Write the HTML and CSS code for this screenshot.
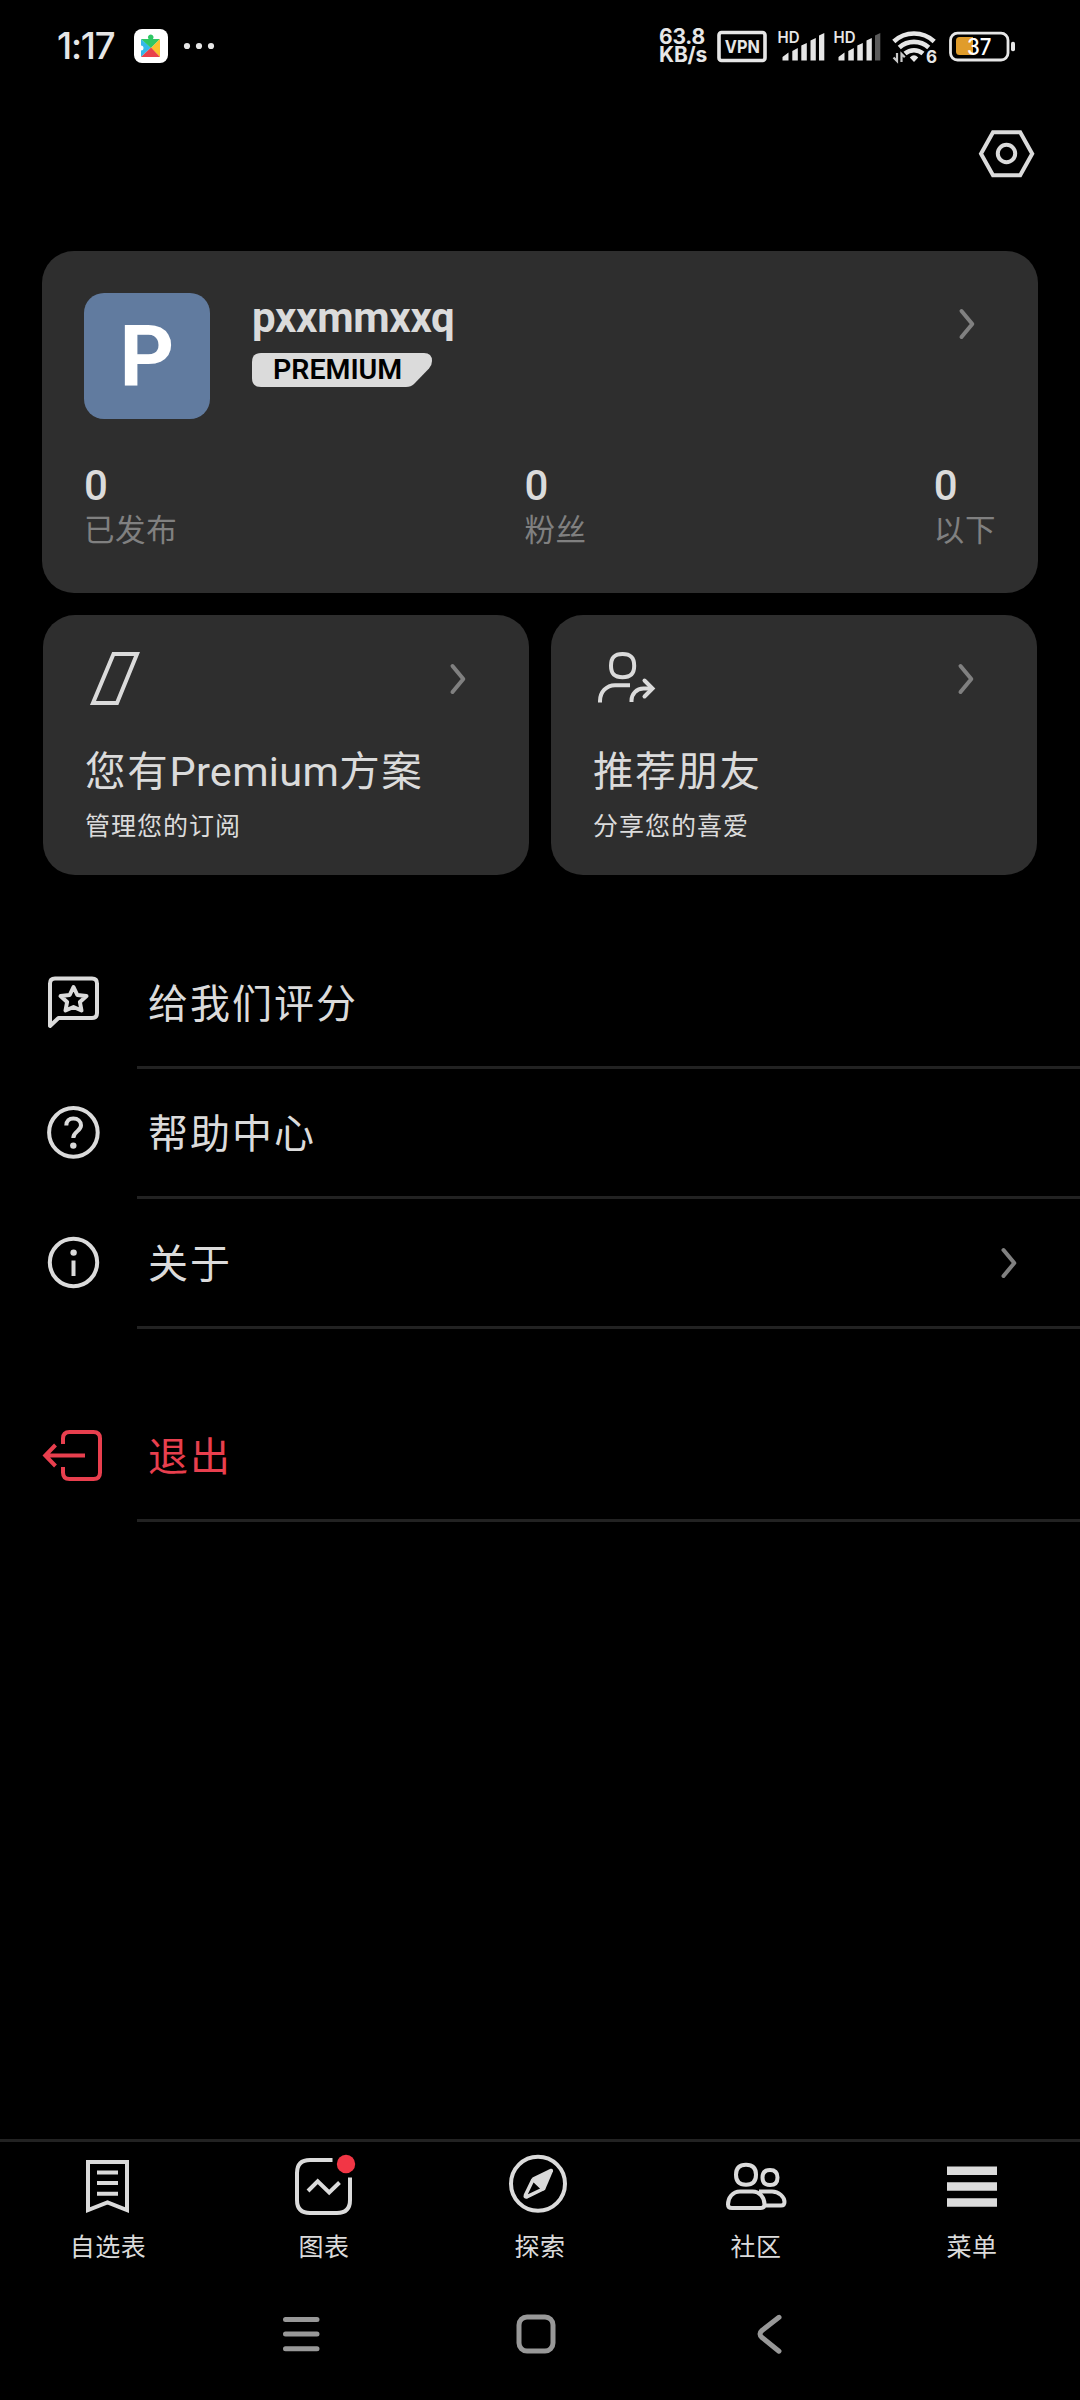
FILE: index.html
```html
<!DOCTYPE html>
<html lang="zh-CN">
<head>
<meta charset="utf-8">
<title>菜单</title>
<link rel="stylesheet" href="styles.css">
</head>
<body>
<div class="screen">
  <header class="status">
    <span class="clock">1:17</span>
    <svg class="app" viewBox="0 0 34 34" width="34" height="34">
      <rect width="34" height="34" rx="8" fill="#fff"/>
      <path d="M7 10v6.500a2.500 2.500 0 1 1 0 5V28l10-9.500Z" fill="#35b9ea"/>
      <path d="M7 10h7.500a2.800 2.800 0 1 1 4.500 0h7L17 19Z" fill="#2fc765"/>
      <path d="M26 10v18l-9-9Z" fill="#fbc02f"/>
      <path d="M7 28h19l-9-9.500Z" fill="#e9404a"/>
    </svg>
    <svg class="dots" viewBox="0 0 32 8" width="32" height="8" fill="#e6e6e6"><circle cx="4" cy="4" r="3.100"/><circle cx="16" cy="4" r="3.100"/><circle cx="28" cy="4" r="3.100"/></svg>
    <div class="speed"><span>63.8</span><span>KB/s</span></div>
    <svg class="vpn" viewBox="717 29 51 33" width="51" height="33">
      <rect x="719" y="31.500" width="46" height="28" rx="2.500" fill="none" stroke="#e6e6e6" stroke-width="3.600"/>
      <text x="742.300" y="51.700" class="vpn-text" textLength="35" lengthAdjust="spacingAndGlyphs">VPN</text>
    </svg>
    <svg class="signal" viewBox="777 25 50 41" width="50" height="41" fill="#e6e6e6">
      <text x="777.500" y="42" class="hd" textLength="22" lengthAdjust="spacingAndGlyphs">HD</text>
      <path d="M782.500 59.500v-3.500l6-4.500v8ZM792.300 59.500V50l5.500-3v12.500ZM801.300 59.500V44.500l5.500-2.500v17.500ZM810.500 59.500V39.500l5.300-2.500v22.500ZM819 59.500V34.500l5.300-2.500v27.500Z"/>
    </svg>
    <svg class="signal second" viewBox="777 25 50 41" width="50" height="41" fill="#e6e6e6">
      <text x="777.500" y="42" class="hd" textLength="22" lengthAdjust="spacingAndGlyphs">HD</text>
      <path d="M782.500 59.500v-3.500l6-4.500v8ZM792.300 59.500V50l5.500-3v12.500ZM801.300 59.500V44.500l5.500-2.500v17.500ZM810.500 59.500V39.500l5.300-2.500v22.500Z"/>
      <path d="M819 59.500V34.500l5.300-2.500v27.500Z" fill="#5a5a5a"/>
    </svg>
    <svg class="wifi" viewBox="892 22 45 48" width="45" height="48">
      <g fill="none" stroke="#e6e6e6" stroke-width="4.600">
        <path d="M893.800 41.500a29.500 29.500 0 0 1 40.400 0"/><path d="M899.300 47.500a22 22 0 0 1 29.400 0"/><path d="M905 53.500a14 14 0 0 1 18 0"/>
      </g>
      <path d="M909.800 57.500q4.200-4.500 8.400 0l-4.200 4.500Z" fill="#e6e6e6"/>
      <path d="M897 53v8l-3.500-3.500M901.500 62v-8l3.300 3.300" fill="none" stroke="#c9c9c9" stroke-width="2.200"/>
      <text x="926" y="62.500" class="six">6</text>
    </svg>
    <svg class="battery" viewBox="948 29 68 33" width="68" height="33">
      <rect x="950.500" y="32.200" width="57.500" height="26.800" rx="7" fill="none" stroke="#e6e6e6" stroke-width="2.800"/>
      <path d="M973 36v18h-13.500a3.500 3.500 0 0 1-3.500-3.500v-11a3.500 3.500 0 0 1 3.500-3.500Z" fill="#e09c2b"/>
      <rect x="1011" y="40.700" width="4" height="9.500" rx="1.800" fill="#e6e6e6"/>
      <text x="967" y="53.800" class="charge" textLength="24.500" lengthAdjust="spacingAndGlyphs">37</text>
    </svg>
  </header>

  <div class="toolbar">
    <svg viewBox="976 127 60 54" width="60" height="54" fill="none" stroke="#dbdbdb" stroke-width="4">
      <path d="M993 132.200h27.200l12 21.500-12 21.500H993l-12-21.500Z"/><circle cx="1006.500" cy="153.500" r="8.700"/>
    </svg>
  </div>

  <main>
    <section class="card profile">
      <div class="profile-top">
        <div class="avatar">P</div>
        <div class="who">
          <div class="name">pxxmmxxq</div>
          <div class="badge">
            <svg viewBox="0 0 180 34" width="180" height="34"><path d="M9 0H172q8 0 8 8 0 4-3 7.500L162 31q-3 3-8 3H9q-9 0-9-9V9q0-9 9-9Z" fill="#dbdbdb"/></svg>
            <span>PREMIUM</span>
          </div>
        </div>
        <svg class="chevron" viewBox="0 0 18 34" width="18" height="34"><path d="M3.500 4 14.300 17 3.500 30"/></svg>
      </div>
      <div class="stats">
        <div><b>0</b><span>已发布</span></div>
        <div><b>0</b><span>粉丝</span></div>
        <div><b>0</b><span>以下</span></div>
      </div>
    </section>

    <div class="tiles">
      <section class="card tile">
        <div class="tile-top">
          <svg viewBox="85 647 64 64" width="64" height="64" fill="none" stroke="#dbdbdb" stroke-width="4"><path d="M113.500 654h23.500l-20 49H93Z"/></svg>
          <svg class="chevron" viewBox="0 0 18 34" width="18" height="34"><path d="M3.500 4 14.300 17 3.500 30"/></svg>
        </div>
        <h2>您有<span class="latin">Premium</span>方案</h2>
        <p>管理您的订阅</p>
      </section>
      <section class="card tile">
        <div class="tile-top">
          <svg viewBox="593 647 64 64" width="64" height="64" fill="none" stroke="#dbdbdb" stroke-width="4">
            <path d="M622.500 654c8 0 11.700 3.500 11.700 11.700s-3.700 11.500-11.700 11.500-11.500-3.300-11.500-11.500 3.500-11.700 11.500-11.700Z"/>
            <path d="M600 702.500v-1.500c0-9 6.500-15.800 15-15.800h15M631.500 702v-1.500c0-6.500 5-12 12-12h9"/>
            <path d="M644.500 680.500l8 8-8 8" stroke-linecap="round"/>
          </svg>
          <svg class="chevron" viewBox="0 0 18 34" width="18" height="34"><path d="M3.500 4 14.300 17 3.500 30"/></svg>
        </div>
        <h2>推荐朋友</h2>
        <p>分享您的喜爱</p>
      </section>
    </div>

    <ul class="list">
      <li>
        <svg viewBox="40 970 66 66" width="66" height="66" fill="none" stroke="#dbdbdb" stroke-width="4" stroke-linejoin="round">
          <path d="M50 1026V983.500q0-5 5-5h37q5 0 5 5V1013q0 5-5 5H58.500Z"/>
          <path d="M73.500 987l3.800 8 9.200 1-6.600 6 1.600 8.500-8-3.500-8 3.500 1.600-8.500-6.600-6 9.200-1Z"/>
        </svg>
        <span>给我们评分</span>
      </li>
      <li>
        <svg viewBox="40 1100 66 66" width="66" height="66" fill="none" stroke="#dbdbdb" stroke-width="4">
          <circle cx="73.400" cy="1132.400" r="24.300"/>
          <path d="M66.300 1125.500c0-4.500 3-7 7-7 4.500 0 7.700 2.800 7.700 6.800 0 6.200-7.700 5.700-7.700 12.700"/>
          <circle cx="73.300" cy="1145.600" r="3.200" fill="#dbdbdb" stroke="none"/>
        </svg>
        <span>帮助中心</span>
      </li>
      <li>
        <svg viewBox="40 1230 66 66" width="66" height="66" fill="none" stroke="#dbdbdb" stroke-width="4">
          <circle cx="73.500" cy="1262.500" r="23.700"/>
          <path d="M73.500 1260.500v15.500"/>
          <circle cx="73.600" cy="1252.600" r="3.200" fill="#dbdbdb" stroke="none"/>
        </svg>
        <span>关于</span>
        <svg class="chevron" viewBox="0 0 18 34" width="18" height="34"><path d="M3.500 4 14.300 17 3.500 30"/></svg>
      </li>
      <li class="logout">
        <svg viewBox="40 1423 66 66" width="66" height="66" fill="none" stroke="#e83f4e" stroke-width="4">
          <path d="M63 1444v-5.500q0-6.500 6.500-6.500h24q6.500 0 6.500 6.500v34q0 6.500-6.500 6.500h-24q-6.500 0-6.500-6.500V1467M85 1455.500H45.500M55.500 1445l-10.200 10.500 10.200 10.500"/>
        </svg>
        <span>退出</span>
      </li>
    </ul>
  </main>

  <nav class="tabs">
    <a>
      <svg viewBox="75 2152 66 66" width="66" height="66" fill="none" stroke="#dbdbdb" stroke-width="4"><path d="M88 2162h39v48l-19.500-7.500L88 2210ZM97 2172.500h21M97 2183h21M97 2193.800h21"/></svg>
      <span>自选表</span>
    </a>
    <a>
      <svg viewBox="291 2152 66 66" width="66" height="66" fill="none" stroke="#dbdbdb" stroke-width="4"><path d="M332.500 2160H310q-13 0-13 13v27q0 13 13 13h27q13 0 13-13v-22.500"/><path d="M308 2191l9.700-9.700 11.500 11.200 10.300-10"/><circle cx="346" cy="2164" r="9.200" fill="#f23645" stroke="none"/></svg>
      <span>图表</span>
    </a>
    <a>
      <svg viewBox="507 2152 66 66" width="66" height="66" fill="none" stroke="#dbdbdb" stroke-width="4"><circle cx="538" cy="2183.700" r="27"/><path d="M533 2179.500l-7.500 15.500q-.800 2.500 1.700 1.700L543 2189l-10-9.500" stroke-linejoin="round" stroke-width="3.600"/><path d="M550.500 2168.700q3-.5 2.500 2.500L545 2190l-2 .5L531.500 2179l1-1.500Z" fill="#dbdbdb" stroke="none"/></svg>
      <span>探索</span>
    </a>
    <a>
      <svg viewBox="723 2152 66 66" width="66" height="66" fill="none" stroke="#dbdbdb" stroke-width="4"><path d="M746 2164.700c7 0 10 4 10 10s-3 10-10 10-10-4-10-10 3-10 10-10ZM770 2170c5.500 0 7.500 3 7.500 7.500s-2 7.500-7.500 7.500-7.500-3-7.500-7.500 2-7.500 7.500-7.500Z"/><path d="M740 2191.500h12.500c7.500 0 12 6.500 12 13 0 3-2 3.500-4 3.500h-28.500c-2 0-4-.5-4-3.500 0-6.500 4.500-13 12-13ZM759 2191.500h13c7 0 12.500 5.500 12.500 10.500 0 2.500-1 3.500-3.500 3.500H765"/></svg>
      <span>社区</span>
    </a>
    <a>
      <svg viewBox="939 2152 66 66" width="66" height="66" fill="#dbdbdb"><path d="M947 2166.500h50v8.500h-50ZM947 2182.300h50v8.500h-50ZM947 2198.200h50v8.500h-50Z"/></svg>
      <span>菜单</span>
    </a>
  </nav>

  <footer class="system">
    <svg viewBox="281 2312 42 44" width="42" height="44" stroke="#989898" stroke-width="5" stroke-linecap="round"><path d="M285.500 2319.500h31.500M285.500 2334h31.500M285.500 2348.700h31.500"/></svg>
    <svg viewBox="515 2312 42 44" width="42" height="44" fill="none" stroke="#989898" stroke-width="5"><rect x="519" y="2317" width="34" height="34" rx="8"/></svg>
    <svg viewBox="749 2312 42 44" width="42" height="44" fill="none" stroke="#989898" stroke-width="5" stroke-linecap="round" stroke-linejoin="round"><path d="M779 2317.300l-17 13.200q-4 3.500 0 7l17 13.700"/></svg>
  </footer>
</div>
</body>
</html>
```
FILE: styles.css
```css
* { box-sizing: border-box; margin: 0; padding: 0; }
body { background: #000; color: #dbdbdb; font-family: Roboto, "Noto Sans CJK SC", sans-serif; }
svg { display: block; flex: none; }
.screen { width: 1080px; height: 2400px; display: flex; flex-direction: column; background: #000; overflow: hidden; }

.status { height: 92px; padding: 0 64px 0 57px; display: flex; align-items: center; font-family: Inter, sans-serif; color: #e6e6e6; }
.status svg { overflow: visible; }
.clock { width: 77px; font-size: 36.500px; font-weight: 500; letter-spacing: -1.2px; line-height: 36px; white-space: nowrap; }
.dots { margin-left: 15px; }
.speed { display: flex; flex-direction: column; margin-left: auto; width: 58px; font-size: 21px; font-weight: 700; line-height: 18.500px; white-space: nowrap; letter-spacing: -0.2px; }
.signal { margin-left: 9px; }
.signal.second { margin-left: 6px; }
.wifi { margin-left: 9px; }
.battery { margin-left: 11px; }
.vpn-text { font-size: 18px; font-weight: 700; fill: #e6e6e6; text-anchor: middle; }
.hd { font-size: 15.500px; font-weight: 600; }
.six { font-size: 17px; font-weight: 700; fill: #e6e6e6; }
.charge { font-size: 22.500px; font-weight: 500; fill: #fff; }

.toolbar { height: 159px; padding: 35px 44px 0; display: flex; justify-content: flex-end; }

.card { background: #2e2e2e; border-radius: 32px; }
.chevron { fill: none; stroke: #808080; stroke-width: 4; stroke-linecap: round; stroke-linejoin: round; margin-left: auto; }

.profile { width: 996px; height: 342px; margin: 0 42px; padding: 42px; }
.profile-top { display: flex; height: 126px; }
.avatar { width: 126px; height: 126px; border-radius: 20px; background: #617b9f; color: #fff; font-size: 85px; font-weight: 700; line-height: 128px; text-align: center; }
.who { margin-left: 42px; }
.name { font-size: 42px; font-weight: 700; line-height: 48px; height: 60px; padding-top: 1px; letter-spacing: -0.3px; }
.badge { display: grid; width: 180px; height: 34px; color: #000; font-size: 28.500px; font-weight: 600; line-height: 34px; }
.badge > * { grid-area: 1 / 1; }
.badge span { padding-left: 21px; }
.profile .chevron { margin-top: 14px; margin-right: 20px; }
.stats { display: flex; justify-content: space-between; margin-top: 43px; }
.stats div { display: flex; flex-direction: column; }
.stats b { font-size: 42px; font-weight: 500; line-height: 48px; }
.stats span { font-size: 30.500px; letter-spacing: 0.600px; line-height: 42px; color: #808080; }

.tiles { display: flex; gap: 22px; margin: 22px 43px 0; }
.tile { width: 486px; height: 260px; padding: 30px 42px; }
.tile-top { display: flex; align-items: center; height: 68px; }
.tile .chevron { margin-right: 20px; }
.tile h2 { font-size: 40.500px; font-weight: 400; letter-spacing: 1.700px; height: 50px; line-height: 50px; margin-top: 34px; white-space: nowrap; }
.tile .latin { font-size: 41.500px; letter-spacing: 0.300px; }
.tile p { font-size: 25px; letter-spacing: 1px; line-height: 36px; margin-top: 12px; }

.list { list-style: none; margin-top: 64px; }
.list li { height: 130px; display: flex; align-items: center; padding: 0 62px 3px 40px; font-size: 40px; letter-spacing: 2px; background: linear-gradient(#222, #222) 137px 100% / 100% 3px no-repeat; }
.list li span { margin-left: 42px; padding-bottom: 4px; }
.list .logout { margin-top: 63px; color: #e83f4e; }

.tabs { margin-top: auto; height: 141px; border-top: 3px solid #222; display: flex; padding-top: 10px; }
.tabs a { width: 216px; display: flex; flex-direction: column; align-items: center; gap: 15px; }
.tabs span { font-size: 25px; line-height: 30px; letter-spacing: 0.5px; }

.system { height: 120px; display: flex; gap: 192px; padding: 32px 281px 0; }
```
